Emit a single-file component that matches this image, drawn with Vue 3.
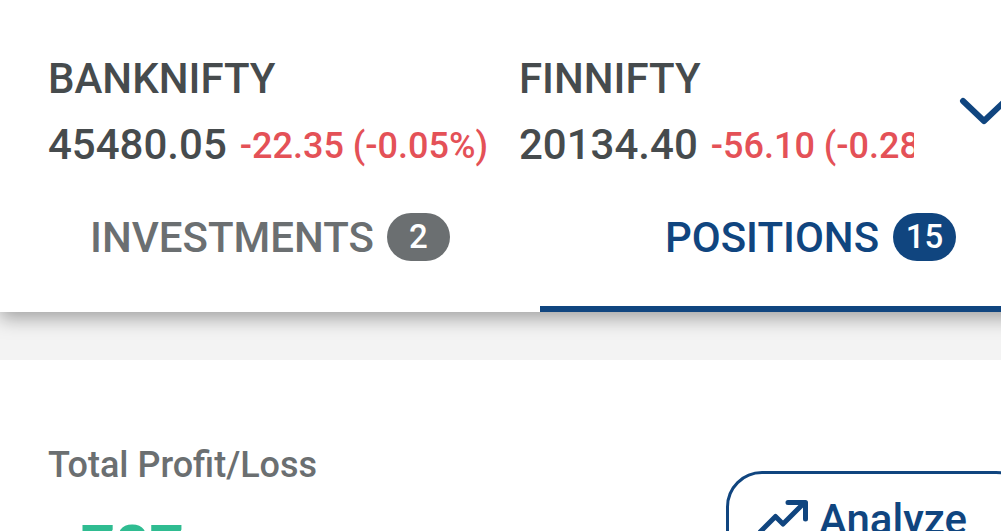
<script setup>
const indices = [
  { name: "BANKNIFTY", price: "45480.05", change: "-22.35 (-0.05%)" },
  { name: "FINNIFTY", price: "20134.40", change: "-56.10 (-0.28%)" },
];

const tabs = [
  { label: "INVESTMENTS", count: 2, active: false },
  { label: "POSITIONS", count: 15, active: true },
];
</script>

<template>
  <div class="screen">
    <header class="header">
      <div class="ticker">
        <div class="indices">
          <div v-for="item in indices" :key="item.name" class="index">
            <div class="index-name">{{ item.name }}</div>
            <div class="index-values">
              <span class="price">{{ item.price }}</span>
              <span class="change">{{ item.change }}</span>
            </div>
          </div>
        </div>
        <svg class="chevron" width="52" height="30" viewBox="0 0 52 30">
          <path d="M5 5 L26 25 L47 5" />
        </svg>
      </div>
      <nav class="tabs">
        <button
          v-for="tab in tabs"
          :key="tab.label"
          class="tab"
          :class="{ active: tab.active }"
        >
          <span class="tab-label">{{ tab.label }}</span>
          <span class="badge">{{ tab.count }}</span>
        </button>
      </nav>
    </header>

    <main class="summary">
      <div>
        <div class="summary-label">Total Profit/Loss</div>
        <div class="summary-value">+787</div>
      </div>
      <button class="analyze">
        <svg class="trend" width="54" height="42" viewBox="0 0 54 42">
          <path d="M1 35 L17.5 18.5 L25 26 L46 5" />
          <path d="M30 4.5 H47.5 V21" />
        </svg>
        <span>Analyze</span>
      </button>
    </main>
  </div>
</template>

<style>
body {
  margin: 0;
  overflow: hidden;
}
</style>

<style scoped>
.screen {
  width: 1001px;
  height: 531px;
  overflow: hidden;
  background-color: #f3f3f3;
  font-family: Roboto, "Liberation Sans", sans-serif;
  font-weight: 500;
}
button {
  margin: 0;
  padding: 0;
  border: none;
  background: none;
  font: inherit;
}
.header {
  width: 1080px;
  height: 312px;
  background-color: #fff;
  box-shadow: 0 6px 18px rgba(0, 0, 0, 0.35);
}
.ticker {
  display: flex;
  height: 187px;
}
.indices {
  display: flex;
  gap: 32px;
  width: 866px;
  padding: 55px 0 0;
  margin-left: 48px;
  overflow: hidden;
}
.index {
  flex: none;
  white-space: nowrap;
}
.index-name,
.index-values {
  height: 66px;
  font-size: 42px;
  line-height: 48px;
  color: #464b4d;
}
.index-values {
  display: flex;
  gap: 13px;
  margin-right: -1px;
}
.change {
  padding-top: 1px;
  font-size: 36px;
  color: #e45157;
}
.chevron {
  margin: 96px 0 0 44px;
}
.chevron path,
.trend path {
  fill: none;
  stroke: #10457f;
  stroke-width: 5;
  stroke-linecap: round;
  stroke-linejoin: round;
}
.chevron path {
  stroke-width: 6;
}
.tabs {
  display: grid;
  grid-template-columns: 1fr 1fr;
  height: 125px;
}
.tab {
  display: flex;
  justify-content: center;
  align-items: center;
  gap: 13px;
  box-sizing: border-box;
  padding-bottom: 19px;
  border-bottom: 6px solid transparent;
  font-size: 42px;
  line-height: 48px;
  color: #6b6f71;
}
.tab-label {
  padding-top: 2px;
}
.tab.active {
  gap: 14px;
  padding-left: 1px;
  border-color: #10457f;
  color: #10457f;
}
.badge {
  width: 63px;
  height: 48px;
  border-radius: 24px;
  background-color: #6b6f71;
  color: #fff;
  font-size: 33px;
  text-align: center;
}
.active .badge {
  background-color: #10457f;
}
.summary {
  display: flex;
  justify-content: space-between;
  align-items: flex-start;
  width: 984px;
  height: 200px;
  margin-top: 48px;
  padding: 84px 48px 0;
  background-color: #fff;
}
.summary-label {
  font-size: 36px;
  line-height: 42px;
  color: #6b6f71;
}
.summary-value {
  margin-top: 26px;
  font-size: 60px;
  font-weight: 700;
  line-height: 70px;
  color: #2fbc91;
}
.analyze {
  display: flex;
  align-items: center;
  gap: 7px;
  box-sizing: border-box;
  width: 306px;
  height: 96px;
  margin-top: 27px;
  padding-left: 29px;
  border: 3px solid #10457f;
  border-radius: 36px;
  color: #10457f;
  font-size: 42px;
}
</style>
